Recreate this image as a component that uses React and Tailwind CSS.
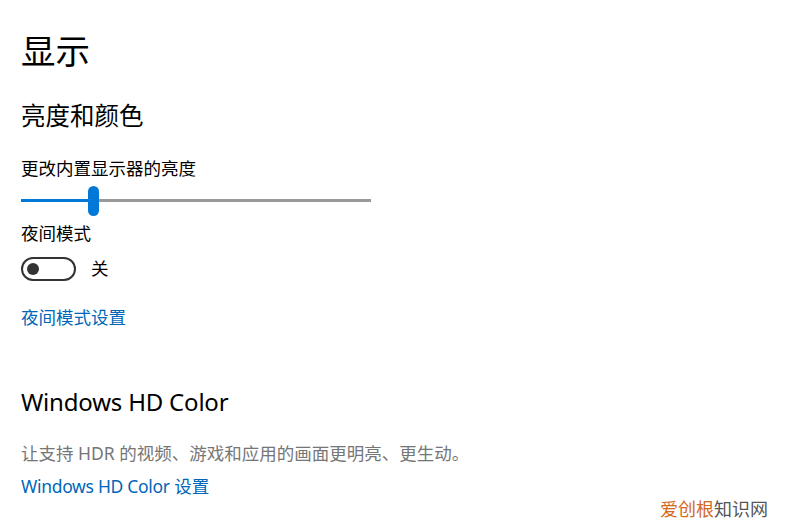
import React from 'react';

const font = { fontFamily: '"Noto Sans", "Noto Sans CJK SC", sans-serif' };

function Slider({ value = 20 }) {
  return (
    <div className="relative w-[350px] h-[31px] flex items-center">
      <div className="w-full h-[3px] bg-[#999999]" />
      <div className="absolute left-0 h-[3px] bg-[#0078d7]" style={{ width: `${value}%` }} />
      <div
        className="absolute w-[11px] h-[30px] rounded-full bg-[#0078d7]"
        style={{ left: `calc(${value}% - 3px)` }}
      />
    </div>
  );
}

function Toggle({ label }) {
  return (
    <div className="flex items-center gap-[15px]">
      <div className="w-[55px] h-[24px] rounded-full border-2 border-[#333333] flex items-center pl-[4px]">
        <div className="w-[12px] h-[12px] rounded-full bg-[#333333]" />
      </div>
      <span className="text-[17.5px] text-black leading-none">{label}</span>
    </div>
  );
}

export default function App() {
  return (
    <div className="w-[794px] h-[529px] bg-white relative overflow-hidden" style={font}>
      <div className="flex flex-col pl-[21px] pt-[28px]">
        <h1 className="text-[34.5px] leading-[46px] text-black">显示</h1>
        <h2 className="mt-[25px] text-[24.5px] leading-[34px] text-black">亮度和颜色</h2>
        <p className="mt-[23px] text-[17.5px] leading-[24px] text-black">更改内置显示器的亮度</p>
        <div className="mt-[5px]">
          <Slider value={20} />
        </div>
        <p className="mt-[5px] text-[17.5px] leading-[24px] text-black">夜间模式</p>
        <div className="mt-[12px]">
          <Toggle label="关" />
        </div>
        <a className="mt-[24px] text-[17.5px] leading-[24px] text-[#0067b8]">夜间模式设置</a>
        <h2 className="mt-[56px] text-[24px] leading-[34px] tracking-[-0.2px] text-black">Windows HD Color</h2>
        <p className="mt-[22px] text-[17.5px] leading-[24px] text-[#767676]">
          让支持 HDR 的视频、游戏和应用的画面更明亮、更生动。
        </p>
        <a className="mt-[9px] text-[17.5px] leading-[24px] text-[#0067b8]">
          <span className="tracking-[-0.3px]">Windows HD Color</span> 设置
        </a>
      </div>
      <div className="absolute right-[26px] bottom-[8px] text-[18px] leading-[24px]">
        <span className="text-[#d2691e]">爱创根</span>
        <span className="text-[#555555]">知识网</span>
      </div>
    </div>
  );
}
